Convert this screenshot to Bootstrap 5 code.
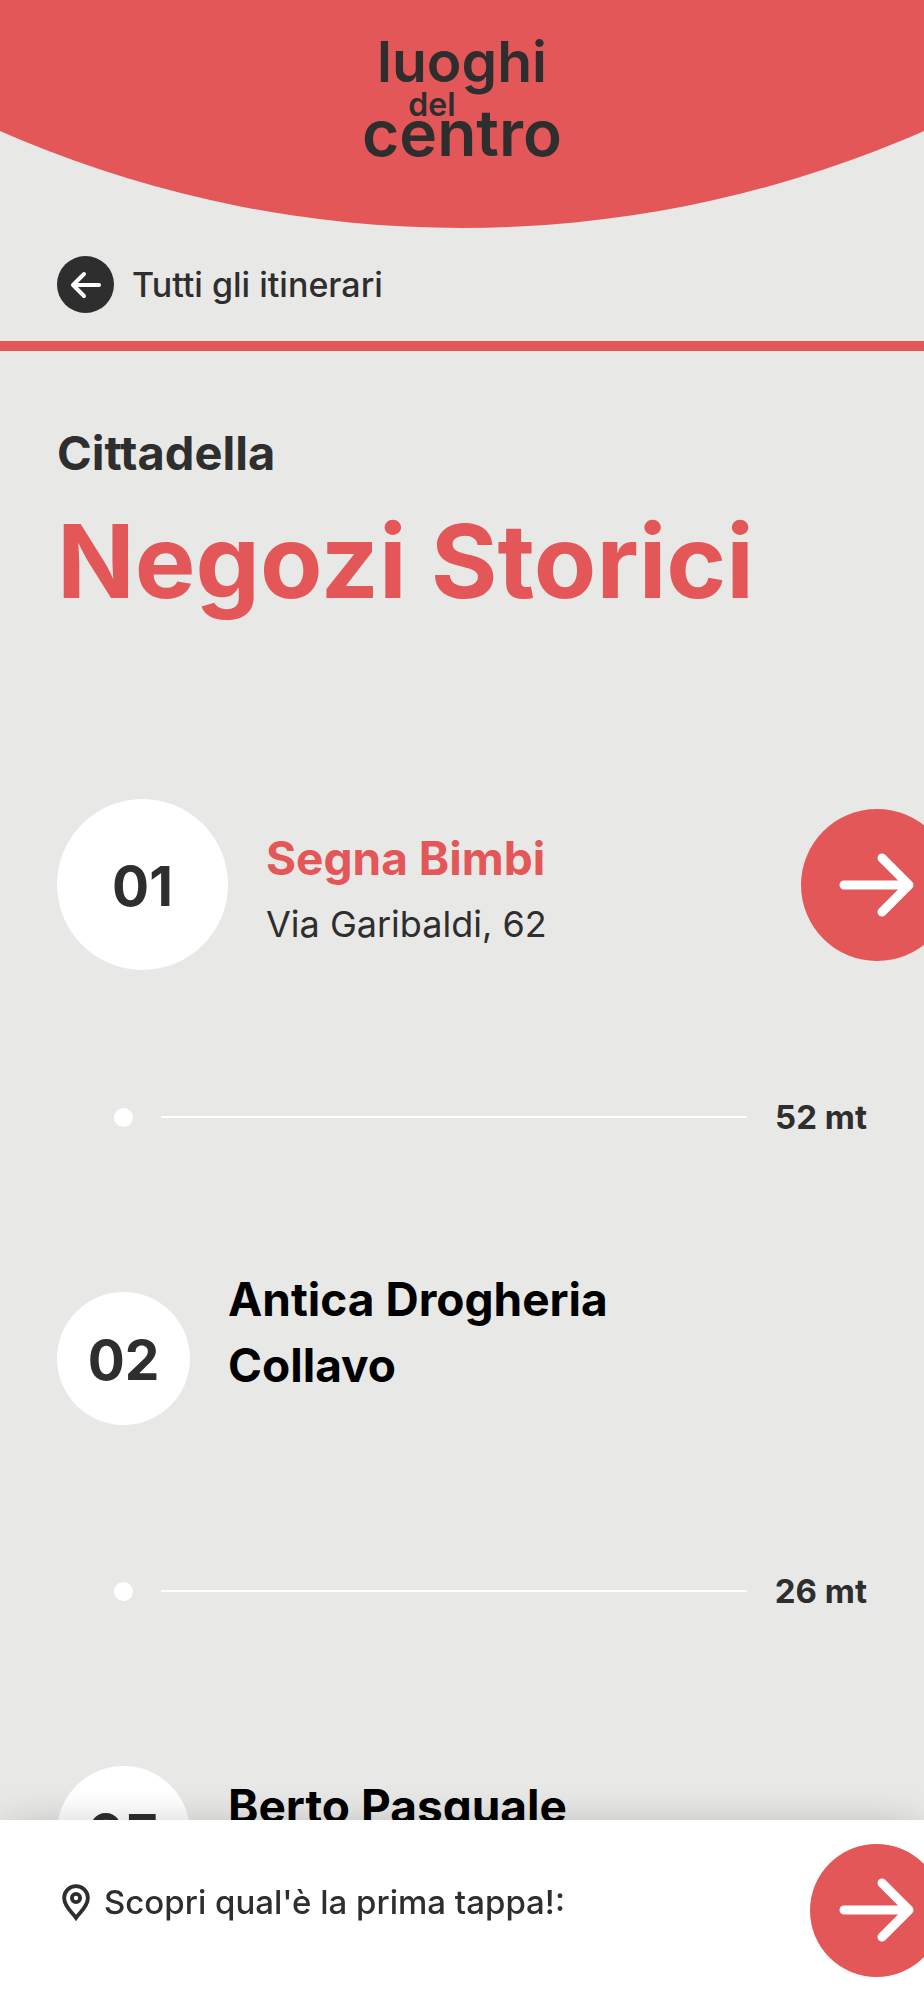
<!DOCTYPE html>
<html lang="it">
<head>
<meta charset="utf-8">
<meta name="viewport" content="width=device-width, initial-scale=1">
<title>Negozi Storici – Luoghi del Centro</title>
<link href="https://cdn.jsdelivr.net/npm/bootstrap@5.3.0/dist/css/bootstrap.min.css" rel="stylesheet">
<style>
  :root { --coral: #e35758; --ink: #2e2e2e; --paper: #e8e8e6; }
  body { background: var(--paper); color: var(--ink); font-family: Inter, "Open Sans", sans-serif; overflow-x: hidden; }
  .page-gutter { padding-left: 57px; padding-right: 57px; }
  .hero-arc { background: var(--coral); height: 228px; padding-top: 30px; clip-path: circle(1149px at 50% -921px); }
  .brand { display: grid; justify-items: center; color: var(--ink); font-weight: 600; font-size: 57px; line-height: 64px; text-decoration: none; }
  .brand-mid { font-size: 32px; line-height: 32px; margin-top: -5px; margin-right: 60px; }
  .brand-low { font-size: 64px; line-height: 64px; margin-top: -20px; }
  .back-bar { border-bottom: 10px solid var(--coral); padding-top: 28px; padding-bottom: 28px; }
  .back-link { color: var(--ink); font-size: 34px; line-height: 57px; font-weight: 500; gap: 18px; }
  .back-dot { width: 57px; height: 57px; background: var(--ink); }
  .town { font-size: 47px; line-height: 64px; font-weight: 700; margin: 0; }
  .route-title { font-size: 102px; line-height: 128px; font-weight: 700; color: var(--coral); margin: 12px 0 0; }
  .intro { padding-top: 70px; padding-bottom: 193px; }
  .stop { height: 133px; gap: 38px; }
  .stop-number { width: 133px; height: 133px; padding-top: 4px; font-size: 55px; font-weight: 700; background: #fff; font-feature-settings: "cv09"; }
  .stop-number.current { width: 171px; height: 171px; }
  .stop-name { font-size: 46px; line-height: 66px; font-weight: 700; color: #000; margin: 0; max-width: 400px; }
  .stop-name.current { color: var(--coral); }
  .stop-address { font-size: 36px; line-height: 42px; min-height: 54px; padding-top: 12px; margin: 0; }
  .go { width: 152px; height: 152px; background: var(--coral); color: #fff; margin-right: -86px; }
  .go-bar { width: 133px; height: 133px; margin-right: -76px; }
  .leg { gap: 28px; padding: 142px 0 151px 57px; font-size: 33px; line-height: 48px; font-weight: 700; }
  .leg-dot { width: 19px; height: 19px; }
  .leg-line { height: 2px; }
  .next-bar { height: 180px; box-shadow: 0 0 38px -8px rgba(0,0,0,.25); font-size: 33px; line-height: 40px; font-weight: 500; }
  .next-text { gap: 9px; padding-bottom: 16px; }
</style>
</head>
<body>
<header>
  <div class="hero-arc">
    <a class="brand" href="#"><span>luoghi</span><span class="brand-mid">del</span><span class="brand-low">centro</span></a>
  </div>
  <nav class="back-bar page-gutter">
    <a class="back-link d-inline-flex align-items-center text-decoration-none" href="#">
      <span class="back-dot rounded-circle d-flex align-items-center justify-content-center flex-shrink-0">
        <svg width="32" height="28" viewBox="0 0 32 28" fill="none" stroke="#fff" stroke-width="4" stroke-linecap="round" stroke-linejoin="round" aria-hidden="true"><path d="M29 14H3M14 3 3 14l11 11"/></svg>
      </span>
      Tutti gli itinerari
    </a>
  </nav>
</header>
<main class="page-gutter">
  <div class="intro">
    <p class="town">Cittadella</p>
    <h1 class="route-title">Negozi Storici</h1>
  </div>
  <section class="stop d-flex align-items-center">
    <div class="stop-number current rounded-circle d-flex align-items-center justify-content-center flex-shrink-0">01</div>
    <div class="flex-grow-1">
      <h2 class="stop-name current">Segna Bimbi</h2>
      <p class="stop-address">Via Garibaldi, 62</p>
    </div>
    <button type="button" class="go btn rounded-circle border-0 p-0 d-flex align-items-center justify-content-center flex-shrink-0" aria-label="Vai a Segna Bimbi">
      <svg width="76" height="64" viewBox="0 0 76 64" fill="none" stroke="currentColor" stroke-width="9" stroke-linecap="round" stroke-linejoin="round" aria-hidden="true"><path d="M5 32h65M43 5l27 27-27 27"/></svg>
    </button>
  </section>
  <div class="leg d-flex align-items-center">
    <span class="leg-dot bg-white rounded-circle"></span><span class="leg-line bg-white flex-grow-1"></span><span>52 mt</span>
  </div>
  <section class="stop d-flex align-items-center">
    <div class="stop-number rounded-circle d-flex align-items-center justify-content-center flex-shrink-0">02</div>
    <div>
      <h2 class="stop-name">Antica Drogheria Collavo</h2>
      <p class="stop-address"></p>
    </div>
  </section>
  <div class="leg d-flex align-items-center">
    <span class="leg-dot bg-white rounded-circle"></span><span class="leg-line bg-white flex-grow-1"></span><span>26 mt</span>
  </div>
  <section class="stop d-flex align-items-center">
    <div class="stop-number rounded-circle d-flex align-items-center justify-content-center flex-shrink-0">03</div>
    <div>
      <h2 class="stop-name">Berto Pasquale</h2>
      <p class="stop-address"></p>
    </div>
  </section>
</main>
<footer class="next-bar page-gutter fixed-bottom bg-white d-flex align-items-center justify-content-between">
  <div class="next-text d-flex align-items-center">
    <svg width="38" height="38" viewBox="0 0 24 24" fill="none" stroke="currentColor" stroke-width="2.4" aria-hidden="true"><path d="M12 22C10 19 4.500 15 4.500 9.500a7.500 7.500 0 0 1 15 0C19.500 15 14 19 12 22Z"/><circle cx="12" cy="9.500" r="2.600"/></svg>
    <span>Scopri qual'è la prima tappa!:</span>
  </div>
  <button type="button" class="go go-bar btn rounded-circle border-0 p-0 d-flex align-items-center justify-content-center flex-shrink-0" aria-label="Vai alla prima tappa">
    <svg width="76" height="64" viewBox="0 0 76 64" fill="none" stroke="currentColor" stroke-width="9" stroke-linecap="round" stroke-linejoin="round" aria-hidden="true"><path d="M5 32h65M43 5l27 27-27 27"/></svg>
  </button>
</footer>
<script src="https://cdn.jsdelivr.net/npm/bootstrap@5.3.0/dist/js/bootstrap.bundle.min.js"></script>
</body>
</html>
